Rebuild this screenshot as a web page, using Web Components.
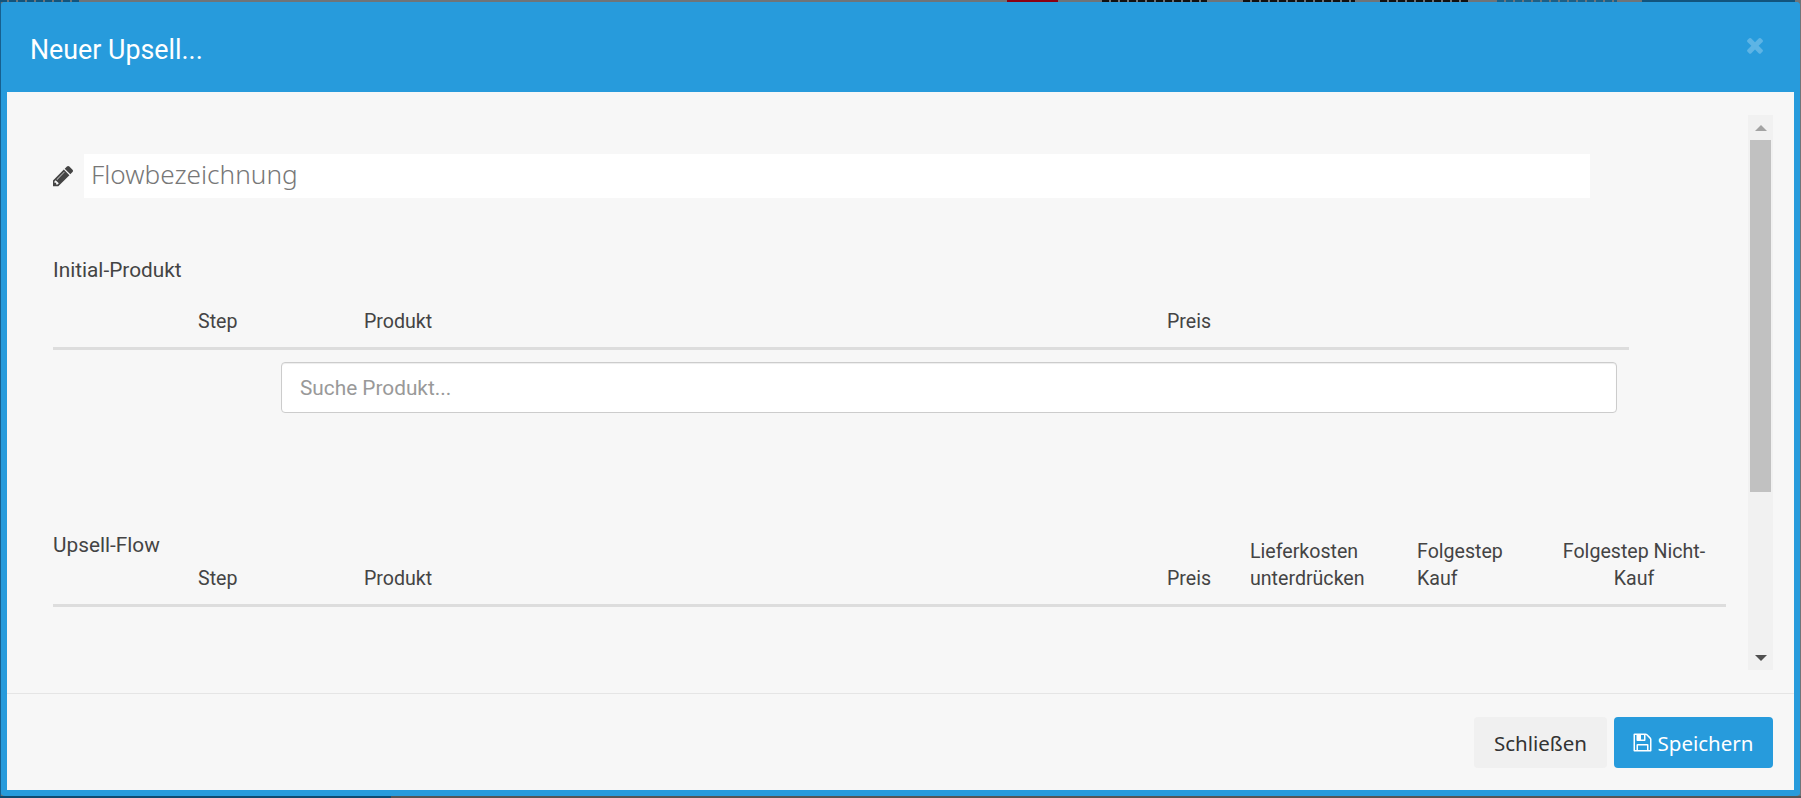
<!DOCTYPE html>
<html lang="de">
<head>
<meta charset="utf-8">
<title>Neuer Upsell</title>
<style>
  html, body { margin: 0; height: 100%; overflow: hidden; background: #6f6f6f; }
  body { font: 19.6px/27px Roboto, "Liberation Sans", sans-serif; color: #444; }
</style>
</head>
<body>
<page-behind></page-behind>

<upsell-modal heading="Neuer Upsell...">
  <name-field placeholder="Flowbezeichnung"></name-field>

  <section-label>Initial-Produkt</section-label>
  <flow-table kind="initial">
    <span>Step</span><span>Produkt</span><span>Preis</span>
  </flow-table>
  <search-box placeholder="Suche Produkt..."></search-box>

  <flow-table kind="upsell">
    <span slot="label">Upsell-Flow</span>
    <span>Step</span><span>Produkt</span><span>Preis</span>
    <span>Lieferkosten unterdrücken</span>
    <span class="narrow">Folgestep Kauf</span>
    <span class="mid">Folgestep Nicht-Kauf</span>
  </flow-table>

  <action-button slot="footer">Schließen</action-button>
  <action-button slot="footer" primary icon="save">Speichern</action-button>
</upsell-modal>

<script>
const ICONS = {
  times: 'M1490 1322q0 40-28 68l-136 136q-28 28-68 28t-68-28l-294-294-294 294q-28 28-68 28t-68-28l-136-136q-28-28-28-68t28-68l294-294-294-294q-28-28-28-68t28-68l136-136q28-28 68-28t68 28l294 294 294-294q28-28 68-28t68 28l136 136q28 28 28 68t-28 68l-294 294 294 294q28 28 28 68z',
  pencil: 'M491 1536l91-91-235-235-91 91v107h128v128h107zm523-928q0-22-22-22-10 0-17 7l-542 542q-7 7-7 17 0 22 22 22 10 0 17-7l542-542q7-7 7-17zm-54-192l416 416-832 832h-416v-416zm683 96q0 53-37 90l-166 166-416-416 166-165q36-38 90-38 53 0 91 38l235 234q37 39 37 91z',
  save: 'M512 1536h768v-384h-768v384zm896 0h128v-896q0-14-10-38.5t-20-34.5l-281-281q-10-10-34-20t-39-10v416q0 40-28 68t-68 28h-576q-40 0-68-28t-28-68v-416h-128v1280h128v-416q0-40 28-68t68-28h832q40 0 68 28t28 68v416zm-384-928v-320q0-13-9.5-22.5t-22.5-9.5h-192q-13 0-22.5 9.5t-9.5 22.5v320q0 13 9.5 22.5t22.5 9.5h192q13 0 22.5-9.5t9.5-22.5zm640 32v928q0 40-28 68t-68 28h-1344q-40 0-68-28t-28-68v-1344q0-40 28-68t68-28h928q40 0 88 20t76 48l280 280q28 28 48 76t20 88z'
}

const icon = (name, size) =>
  `<svg width="${size}" height="${size}" viewBox="0 0 1792 1792" fill="currentColor" aria-hidden="true"><path d="${ICONS[name]}"/></svg>`

// dimmed page that peeks out around the modal
class PageBehind extends HTMLElement {
  constructor () {
    super()
    this.attachShadow({ mode: 'open' })
  }

  connectedCallback () {
    const dash = c => `repeating-linear-gradient(90deg, ${c} 0 7px, transparent 7px 9px)`
    this.shadowRoot.innerHTML = `
      <style>
        :host { display: flex; flex-direction: column; width: 1801px; height: 798px; background: #6f7478; }
        .top { display: flex; height: 2px; }
        .top i { display: block; height: 2px; }
        .mid { flex: 1; display: flex; }
        .edge { width: 1px; background: #17608f; }
        .bottom { display: flex; height: 2px; background: #555; }
        .bottom i { display: block; width: 391px; background: #0e4a70; }
      </style>
      <div class="top">
        <i style="width:80px;background:${dash('#12547d')}"></i>
        <i style="width:927px"></i>
        <i style="width:51px;background:#8a0014"></i>
        <i style="width:44px"></i>
        <i style="width:105px;background:${dash('#111')}"></i>
        <i style="width:36px"></i>
        <i style="width:112px;background:${dash('#111')}"></i>
        <i style="width:25px"></i>
        <i style="width:90px;background:${dash('#111')}"></i>
        <i style="width:27px"></i>
        <i style="width:120px;background:${dash('#1c5f86')}"></i>
        <i style="width:25px"></i>
        <i style="width:153px;background:#12547d"></i>
      </div>
      <div class="mid"><div class="edge"></div></div>
      <div class="bottom"><i></i></div>
    `
  }
}

class UpsellModal extends HTMLElement {
  constructor () {
    super()
    this.attachShadow({ mode: 'open' })
  }

  connectedCallback () {
    this.shadowRoot.innerHTML = `
      <style>
        :host {
          position: absolute; left: 1px; top: 2px;
          display: flex; flex-direction: column;
          width: 1799px; height: 794px; box-sizing: border-box;
          background: #f7f7f7; border: 6px solid #279bdc; border-top: 0; border-radius: 4px;
        }
        header {
          display: flex; align-items: center; justify-content: space-between;
          height: 90px; margin: 0 -6px; padding: 0 0 0 29px; box-sizing: border-box;
          background: #279bdc; color: #fff; border-radius: 4px 4px 0 0;
        }
        h4 { margin: 6px 0 0; font: 400 26.8px/34px Roboto, sans-serif; }
        .close { display: flex; margin: -5px 33px 0 0; color: rgba(255, 255, 255, .25); }
        .body { flex: 1; display: flex; min-height: 0; padding: 23px 21px 23px 46px; }
        .scroll { flex: 1; min-width: 0; padding: 39px 22px 0 0; overflow: hidden; }
        footer {
          display: flex; justify-content: flex-end; gap: 7px;
          height: 97px; box-sizing: border-box; padding: 23px 21px 0 0;
          border-top: 1px solid #e5e5e5;
        }
      </style>
      <header>
        <h4>${this.getAttribute('heading')}</h4>
        <span class="close">${icon('times', 24)}</span>
      </header>
      <div class="body">
        <div class="scroll"><slot></slot></div>
        <scroll-rail></scroll-rail>
      </div>
      <footer><slot name="footer"></slot></footer>
    `
  }
}

class ScrollRail extends HTMLElement {
  constructor () {
    super()
    this.attachShadow({ mode: 'open' })
    this.shadowRoot.innerHTML = `
      <style>
        :host { display: flex; flex-direction: column; align-items: center; width: 25px; background: #f1f1f1; }
        .btn { flex: none; display: flex; align-items: center; justify-content: center; width: 100%; height: 25px; }
        .thumb { flex: none; width: 21px; height: 352px; background: #c1c1c1; }
        .gap { flex: 1; }
        .up { border: 6px solid transparent; border-top: 0; border-bottom-color: #a3a3a3; }
        .down { border: 6px solid transparent; border-bottom: 0; border-top-color: #505050; }
      </style>
      <div class="btn"><i class="up"></i></div>
      <div class="thumb"></div>
      <div class="gap"></div>
      <div class="btn"><i class="down"></i></div>
    `
  }
}

class NameField extends HTMLElement {
  constructor () {
    super()
    this.attachShadow({ mode: 'open' })
  }

  connectedCallback () {
    this.shadowRoot.innerHTML = `
      <style>
        :host { display: flex; align-items: center; gap: 9px; width: 1537px; height: 44px; color: #444; }
        svg { flex: none; margin-left: -2px; }
        input {
          flex: 1; min-width: 0; height: 44px; box-sizing: border-box; padding: 0 7px 4px;
          border: 0; outline: 0; background: #fff;
          font: 300 26.2px "Noto Sans", "Open Sans", sans-serif;
        }
        input::placeholder { color: #777; opacity: 1; }
      </style>
      ${icon('pencil', 24)}
      <input type="text" placeholder="${this.getAttribute('placeholder')}">
    `
  }
}

class SectionLabel extends HTMLElement {
  constructor () {
    super()
    this.attachShadow({ mode: 'open' })
    this.shadowRoot.innerHTML = `
      <style>:host { display: block; margin-top: 58.5px; color: #444; font-size: 20.8px; }</style>
      <slot></slot>
    `
  }
}

class FlowTable extends HTMLElement {
  constructor () {
    super()
    this.attachShadow({ mode: 'open' })
  }

  connectedCallback () {
    const upsell = this.getAttribute('kind') === 'upsell'
    this.shadowRoot.innerHTML = `
      <style>
        :host { display: block; }
        .head {
          position: relative; display: grid; align-items: end;
          border-bottom: 3px solid #ddd; padding-bottom: 12.5px;
          ${upsell
            ? 'grid-template-columns: 145px 166px 803px 83px 167px 144px 146px; width: 1673px; margin-top: 117.5px;'
            : 'grid-template-columns: 145px 166px 803px auto; width: 1576px; margin-top: 24px;'}
        }
        .label { font-size: 20.8px; ${upsell ? 'grid-row: 1; grid-column: 1; align-self: start; padding-top: 1px; margin-bottom: 33px;' : 'display: none;'} }
        ::slotted(span) { padding-top: ${upsell ? '7px' : '0'}; }
        ::slotted(span.mid) { text-align: center; }
        ::slotted(span.narrow) { padding-right: 40px; }
        .skip { grid-row: 1; grid-column: 1; }
      </style>
      <div class="head">
        <div class="label"><slot name="label"></slot></div>
        <div class="skip"></div>
        <slot></slot>
      </div>
    `
  }
}

class SearchBox extends HTMLElement {
  constructor () {
    super()
    this.attachShadow({ mode: 'open' })
  }

  connectedCallback () {
    this.shadowRoot.innerHTML = `
      <style>
        :host { display: block; width: 1336px; margin: 12px 0 0 228px; }
        input {
          display: block; width: 100%; height: 51px; box-sizing: border-box; padding: 0 18px;
          background: #fff; border: 1px solid #ccc; border-radius: 4px; outline: 0;
          box-shadow: inset 0 1px 1px rgba(0, 0, 0, .075);
          font: 20.8px Roboto, sans-serif; color: #444;
        }
        input::placeholder { color: #999; opacity: 1; }
      </style>
      <input type="text" placeholder="${this.getAttribute('placeholder')}">
    `
  }
}

class ActionButton extends HTMLElement {
  constructor () {
    super()
    this.attachShadow({ mode: 'open' })
  }

  connectedCallback () {
    const primary = this.hasAttribute('primary')
    const name = this.getAttribute('icon')
    this.shadowRoot.innerHTML = `
      <style>
        :host {
          display: inline-flex; align-items: center; justify-content: center; gap: 6px;
          height: 51px; box-sizing: border-box; border-radius: 4px;
          width: ${primary ? '159px' : '133px'};
          background: ${primary ? '#279bdc' : '#f0f0f0'};
          color: ${primary ? '#fff' : '#333'};
          font: 20.5px "Noto Sans", "Open Sans", sans-serif;
        }
        svg { flex: none; margin: 0 -1.5px; }
      </style>
      ${name ? icon(name, 21) : ''}<span><slot></slot></span>
    `
  }
}

customElements.define('page-behind', PageBehind)
customElements.define('upsell-modal', UpsellModal)
customElements.define('scroll-rail', ScrollRail)
customElements.define('name-field', NameField)
customElements.define('section-label', SectionLabel)
customElements.define('flow-table', FlowTable)
customElements.define('search-box', SearchBox)
customElements.define('action-button', ActionButton)
</script>
</body>
</html>
